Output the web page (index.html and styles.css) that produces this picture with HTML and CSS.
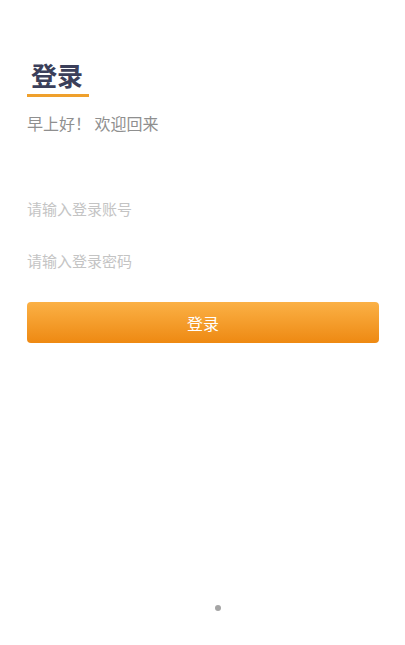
FILE: index.html
```html
<!DOCTYPE html>
<html lang="zh">
<head>
<meta charset="utf-8">
<link rel="stylesheet" href="styles.css">
</head>
<body>
<div class="page">
  <div class="header">
    <h1 class="title">登录</h1>
    <div class="title-bar"></div>
    <p class="greeting">早上好！ 欢迎回来</p>
  </div>
  <form class="form">
    <input class="field" type="text" placeholder="请输入登录账号">
    <input class="field" type="password" placeholder="请输入登录密码">
    <button class="submit" type="button">登录</button>
  </form>
  <div class="spacer"></div>
  <div class="dots"><span class="dot"></span></div>
</div>
</body>
</html>
```
FILE: styles.css
```css
* { box-sizing: border-box; }
html, body { margin: 0; padding: 0; background: #fff; }
body {
  font-family: "Noto Sans CJK SC", "Noto Sans", sans-serif;
  width: 405px;
  height: 645px;
  overflow: hidden;
}
.page {
  display: flex;
  flex-direction: column;
  height: 645px;
  padding: 0 26px 0 27px;
}
.header {
  display: flex;
  flex-direction: column;
  padding-top: 60px;
}
.title {
  margin: 0 0 0 4px;
  font-size: 26px;
  line-height: 30px;
  font-weight: 700;
  color: #3b3f5a;
}
.title-bar {
  width: 62px;
  height: 3px;
  margin-top: 4px;
  background: #efa02c;
}
.greeting {
  margin: 15px 0 0;
  font-size: 16px;
  line-height: 22px;
  color: #8f8f8f;
}
.form {
  display: flex;
  flex-direction: column;
  margin-top: 48px;
}
.field {
  border: none;
  outline: none;
  padding: 0;
  height: 52px;
  font-family: inherit;
  font-size: 15px;
  color: #333;
  background: transparent;
}
.field::placeholder { color: #c4c4c4; }
.submit {
  margin-top: 16px;
  height: 41px;
  border: none;
  border-radius: 4px;
  background: linear-gradient(to bottom, #fbb146, #ee8912);
  color: #fff;
  font-family: inherit;
  font-size: 16px;
  padding: 0;
}
.spacer { flex: 1; }
.dots {
  display: flex;
  justify-content: center;
  padding-bottom: 34px;
  padding-left: 30px;
}
.dot {
  width: 6px;
  height: 6px;
  border-radius: 50%;
  background: #a5a5a5;
}
```
